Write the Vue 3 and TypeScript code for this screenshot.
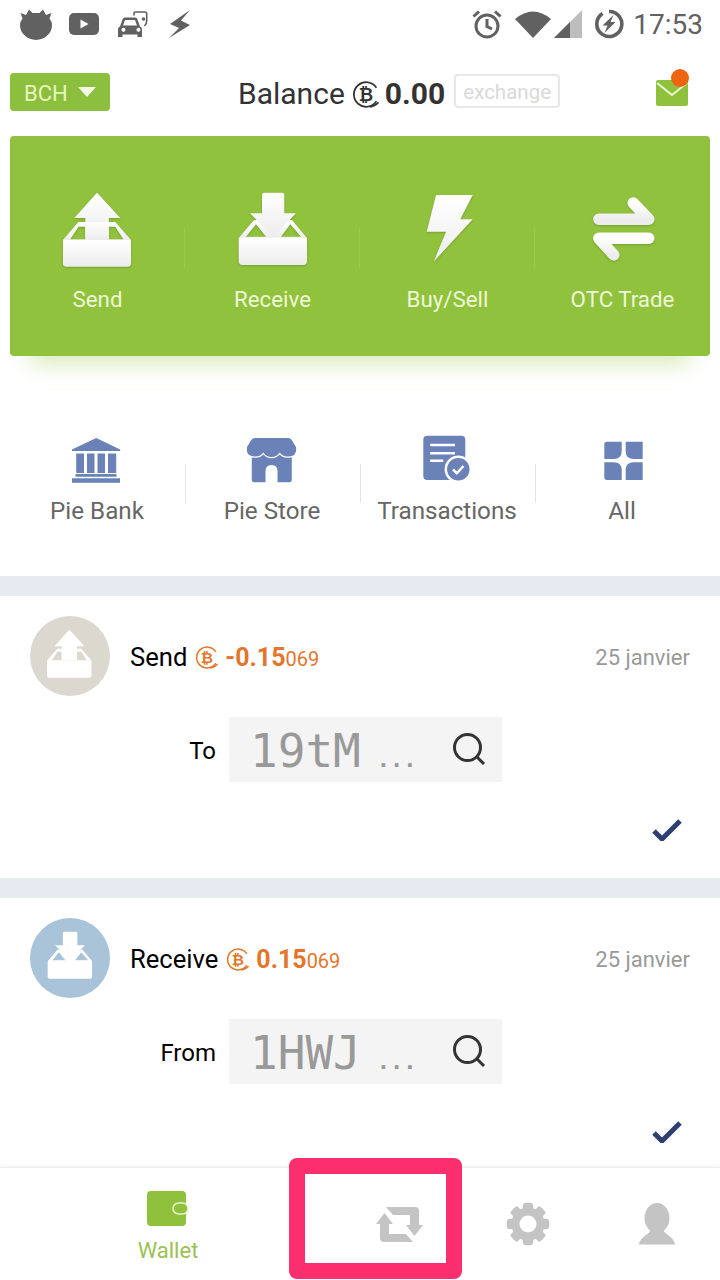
<script setup lang="ts">
const actions = [
  { label: 'Send', icon: '#i-send' },
  { label: 'Receive', icon: '#i-receive' },
  { label: 'Buy/Sell', icon: '#i-bolt' },
  { label: 'OTC Trade', icon: '#i-swap' },
]

const shortcuts = [
  { label: 'Pie Bank', icon: '#i-bank' },
  { label: 'Pie Store', icon: '#i-store' },
  { label: 'Transactions', icon: '#i-doc' },
  { label: 'All', icon: '#i-all' },
]

const transactions = [
  { kind: 'send', title: 'Send', icon: '#i-send', amount: '-0.15', rest: '069', dir: 'To', addr: '19tM', height: 302 },
  { kind: 'receive', title: 'Receive', icon: '#i-receive', amount: '0.15', rest: '069', dir: 'From', addr: '1HWJ', height: 269 },
]

const gearTeeth = [0, 45, 90, 135, 180, 225, 270, 315]
</script>

<template>
  <div class="phone">
    <svg class="defs" width="0" height="0">
      <defs>
        <linearGradient id="soft" x1="0" y1="0" x2="0" y2="1">
          <stop offset="0" stop-color="#ffffff" />
          <stop offset="1" stop-color="#ececec" />
        </linearGradient>
      </defs>
      <symbol id="i-send" viewBox="0.7 0 70 80">
        <path d="M34.7 3Q35.5 3 36 4L58 28H46.5V49H23V28H12L33.5 4Q34 3 34.7 3Z" />
        <path fill-rule="evenodd" d="M.5 50L16 32H53L68.7 50ZM8 49.3H23V36.7H16.3ZM46.5 49.3H61L53 36.7H46.5Z" />
        <path d="M.3 50H68.7V73Q68.7 76.7 65 76.7H4Q.3 76.7 .3 73Z" />
      </symbol>
      <symbol id="i-receive" viewBox="0 0 70 80">
        <path fill-rule="evenodd" d="M.7 48L16 30H54L69 48ZM8 46.7H28L18 34.3ZM43 46.7H63L52.3 34.3Z" />
        <path d="M.7 47.7H69V71Q69 75 65 75H4.7Q.7 75 .7 71Z" />
        <path d="M26.5 2.7H44Q46.3 2.7 46.3 5V23.3H58L35.3 46.7L12 23.3H24V5Q24 2.7 26.5 2.7Z" />
      </symbol>
      <symbol id="i-bolt" viewBox="-8 0 70 80">
        <path d="M15 5H51.7L39.3 29.3H51.7L12.7 71.7L25 41.7H5.7Z" />
      </symbol>
      <symbol id="i-swap" viewBox="-2.5 0 70 80">
        <path class="swap-line" d="M8.3 29.3H58.3L42.7 13" />
        <path class="swap-line" d="M58.3 48.3H8.3L23.3 65" />
      </symbol>
      <symbol id="i-bank" viewBox="0.5 -2 50 50">
        <path d="M24.7 1L48.7 12.5V14H.3V12.5Z" />
        <path d="M4.7 16.5H12.5V36H4.7ZM15.5 16.5H23V36H15.5ZM26 16.5H33.5V36H26ZM36.5 16.5H44.7V36H36.5Z" />
        <path d="M4 37H45V39.7H4ZM.5 41.3H48.5V45.7H.5Z" />
      </symbol>
      <symbol id="i-store" viewBox="0.5 -2 50 50">
        <path d="M5.3 14H45.3V43Q45.3 45.3 43 45.3H31V34Q31 28 25 28T19 34V45.3H7.6Q5.3 45.3 5.3 43Z" />
        <path class="awning" d="M8 1H42Q44.5 1 45.5 3.5L49.5 10Q51 19 42 19.5Q36 19.8 33.3 15.5Q30 20 25 20T16.7 15.5Q14 19.8 8 19.5Q-1 19 .5 10L4.500 3.5Q5.5 1 8 1Z" />
      </symbol>
      <symbol id="i-doc" viewBox="-1 0 50 50">
        <rect x=".3" y=".7" width="42" height="44.3" rx="4" />
        <path class="doc-line" d="M7 10H32M7 18.3H32M7 25.7H20.3" />
        <circle class="doc-ring" cx="35.3" cy="34.3" r="12.5" />
        <path class="doc-check" d="M30 34.5L33.8 38.3L40.5 31" />
      </symbol>
      <symbol id="i-all" viewBox="-7 -6 50 50">
        <path d="M3 .7H17.7V10Q17.7 18 9.700 18H.3V3.4Q.3 .7 3 .7Z" />
        <path d="M21.700 .7H38.7V18H29.7Q21.7 18 21.7 10Z" />
        <path d="M.3 21.3H9.7Q17.7 21.3 17.7 29.3V39H3Q.3 39 .3 36.3Z" />
        <path d="M29.7 21.3H38.7V39H21.7V29.3Q21.7 21.3 29.7 21.3Z" />
      </symbol>
      <symbol id="i-coin" viewBox="0 0 26 26">
        <path class="coin-arc" d="M23.5 6.5A11.800 11.800 0 1 0 23.500 19.5" />
        <path class="coin-arc" d="M17 24.8Q22 24.5 25.500 20.500" />
      </symbol>
    </svg>

    <div class="status">
      <svg class="st cow" viewBox="0 0 32 32">
        <path d="M.5 5L6 7L9 1.500L12.5 5H19.5L23 1.500L26 7L31.5 5L29.5 10.500Q32 13.500 32 17A16 15 0 0 1 0 17Q0 13.500 2.500 10.500Z" />
      </svg>
      <svg class="st yt" viewBox="0 0 30 22">
        <rect width="30" height="22" rx="5" />
        <path class="cut" d="M11.500 6.500L19.500 11L11.500 15.500Z" />
      </svg>
      <svg class="st car" viewBox="0 0 30 26">
        <path d="M4.500 8.500Q5 6.500 7 6.500H17Q19 6.500 19.500 8.500L22 15.500Q24 16 24 18V26H19.500V23.500H4.500V26H0V18Q0 16 2 15.500ZM5 14.500H19L17 9H7ZM4.500 20.500A2 2 0 1 0 4.500 17A2 2 0 0 0 4.500 20.500ZM19.500 20.500A2 2 0 1 0 19.500 17A2 2 0 0 0 19.500 20.500Z" fill-rule="evenodd" />
        <path class="car-line" d="M16 4.500V2.500Q16 1 17.500 1H27Q28.700 1 28.700 2.500V10Q28.700 13 26.500 15" />
        <circle cx="25.500" cy="8" r="1.800" />
      </svg>
      <svg class="st spark" viewBox="0 0 24 28">
        <path d="M22 0L2 14L11 18L1 28L22 15L13 10.500Z" />
      </svg>

      <div class="status-right">
        <svg class="st alarm" viewBox="0 0 30 30">
          <circle class="line" cx="15" cy="17" r="11" />
          <path class="line" d="M15 10V17.500L20 20M1.500 7.500L7 2.500M28.500 7.500L23 2.500" />
        </svg>
        <svg class="st wifi" viewBox="0 0 36 28">
          <path d="M0 9Q18 -6 36 9L18 28Z" />
        </svg>
        <svg class="st signal" viewBox="0 0 30 30">
          <path class="signal-bg" d="M29 1V29H1Z" />
          <path d="M17 13V29H1Z" />
        </svg>
        <svg class="st power" viewBox="0 0 30 30">
          <path class="ring" d="M8.500 4.500A12.500 12.500 0 1 0 15 2.500" />
          <path d="M19.500 6L8.500 16.500H13.500L10.500 24L21.500 13H16.500Z" />
        </svg>
        <span class="time">17:53</span>
      </div>
    </div>

    <header class="top">
      <div class="coin-btn">BCH<i class="caret"></i></div>
      <div class="balance">
        Balance
        <svg class="coin big" viewBox="0 0 26 26">
          <use href="#i-coin" width="26" height="26" />
          <text x="13.500" y="19" text-anchor="middle" class="coin-b">₿</text>
        </svg>
        <b>0.00</b>
        <span class="exchange">exchange</span>
      </div>
      <div class="mail">
        <svg viewBox="0 0 32 26" width="32" height="26">
          <path class="mail-body" d="M0 2Q0 0 2 0H30Q32 0 32 2V24Q32 26 30 26H2Q0 26 0 24Z" />
          <path class="mail-flap" d="M1 3L16 15L31 3" />
        </svg>
        <i class="dot"></i>
      </div>
    </header>

    <section class="card">
      <div v-for="a in actions" :key="a.label" class="action">
        <svg class="action-icon"><use :href="a.icon" /></svg>
        <span>{{ a.label }}</span>
      </div>
    </section>

    <section class="shortcuts">
      <div v-for="s in shortcuts" :key="s.label" class="shortcut">
        <svg class="shortcut-icon"><use :href="s.icon" /></svg>
        <span>{{ s.label }}</span>
      </div>
    </section>

    <article
      v-for="t in transactions"
      :key="t.kind"
      class="tx"
      :style="{ height: `${t.height}px` }"
    >
      <div class="tx-head">
        <div class="avatar" :class="t.kind">
          <svg class="avatar-icon"><use :href="t.icon" /></svg>
        </div>
        <span class="tx-title">{{ t.title }}</span>
        <svg class="coin small" viewBox="0 0 26 26">
          <use href="#i-coin" width="26" height="26" />
          <text x="13.500" y="19" text-anchor="middle" class="coin-b">₿</text>
        </svg>
        <b class="amount">{{ t.amount }}</b><span class="amount-rest">{{ t.rest }}</span>
        <span class="date">25 janvier</span>
      </div>
      <div class="tx-addr">
        <span class="dir">{{ t.dir }}</span>
        <div class="addr-box">
          <span class="addr">{{ t.addr }}</span>
          <span class="dots">...</span>
          <svg class="search" viewBox="0 0 36 36" width="36" height="36">
            <circle cx="15.500" cy="15.500" r="13" />
            <path d="M25 25L32 32" />
          </svg>
        </div>
      </div>
      <div class="tx-state">
        <svg viewBox="0 0 30 22" width="30" height="22">
          <path d="M2 12L10 20L28 2" />
        </svg>
      </div>
    </article>

    <nav class="tabs">
      <div class="tab wallet">
        <svg viewBox="0 0 42 36" width="42" height="36">
          <rect width="39" height="35" rx="4" />
          <rect class="clasp" x="26" y="12" width="15" height="11" rx="5.500" />
        </svg>
        <span>Wallet</span>
      </div>
      <div></div>
      <div class="tab">
        <svg viewBox="0 -6 48 48" width="48" height="48">
          <path d="M10 1H39Q43 1 43 5V19H47L38.500 30L30 19H34V9H17Z" />
          <path transform="rotate(180 23.500 18.500)" d="M10 1H39Q43 1 43 5V19H47L38.500 30L30 19H34V9H17Z" />
        </svg>
      </div>
      <div class="tab">
        <svg viewBox="0 0 48 48" width="48" height="48">
          <rect
            v-for="deg in gearTeeth"
            :key="deg"
            x="19"
            y="3"
            width="10"
            height="10"
            rx="2"
            :transform="`rotate(${deg} 24 24)`"
          />
          <circle class="gear-ring" cx="24" cy="24" r="12.500" />
        </svg>
      </div>
      <div class="tab">
        <svg viewBox="0 0 48 48" width="48" height="48">
          <ellipse cx="25" cy="18" rx="12.500" ry="15" />
          <path d="M19 29C18 35 8 36 7 44.500H43C42 36 32 35 31 29Z" />
        </svg>
      </div>
    </nav>

    <div class="highlight"></div>
  </div>
</template>

<style>
html,
body {
  background: #fff;
}
</style>

<style scoped>
.phone {
  position: relative;
  display: flex;
  flex-direction: column;
  width: 720px;
  height: 1280px;
  overflow: hidden;
  background: #fff;
  font-family: Roboto, 'Liberation Sans', sans-serif;
}

.defs {
  position: absolute;
}

.swap-line {
  fill: none;
  stroke: url(#soft);
  stroke-width: 11.5;
  stroke-linecap: round;
  stroke-linejoin: round;
}

.awning {
  stroke: #fff;
  stroke-width: 2.5;
  paint-order: stroke;
}

.doc-line {
  fill: none;
  stroke: #fff;
  stroke-width: 2.4;
}

.doc-ring {
  stroke: #fff;
  stroke-width: 2.5;
}

.doc-check {
  fill: none;
  stroke: #fff;
  stroke-width: 2.5;
}

.coin-arc {
  fill: none;
  stroke: currentColor;
  stroke-width: 1.7;
}

.coin-b {
  font-family: 'DejaVu Sans', sans-serif;
  font-weight: 700;
  font-size: 17px;
  fill: currentColor;
}

/* status bar */
.status {
  display: flex;
  align-items: center;
  flex: none;
  height: 50px;
  padding: 0 17px 2px 20px;
  box-sizing: border-box;
}

.st {
  flex: none;
  fill: #616161;
}

.cow {
  width: 32px;
  height: 32px;
  margin-right: 17px;
}

.yt {
  width: 30px;
  height: 22px;
  margin-right: 19px;
}

.yt .cut {
  fill: #fff;
}

.car {
  width: 30px;
  height: 26px;
  margin-right: 20px;
}

.car-line {
  fill: none;
  stroke: #616161;
  stroke-width: 1.6;
}

.spark {
  width: 24px;
  height: 28px;
}

.status-right {
  display: flex;
  align-items: center;
  margin-left: auto;
}

.alarm {
  width: 30px;
  height: 30px;
  margin-right: 13px;
}

.line {
  fill: none;
  stroke: #616161;
  stroke-width: 3;
}

.ring {
  fill: none;
  stroke: #616161;
  stroke-width: 3.6;
}

.wifi {
  width: 36px;
  height: 28px;
  margin-right: 2px;
}

.signal {
  width: 30px;
  height: 30px;
  margin-right: 11px;
}

.signal-bg {
  fill: #bdbdbd;
}

.power {
  width: 30px;
  height: 30px;
  margin-right: 9px;
}

.time {
  color: #616161;
  font-size: 28px;
}

/* balance row */
.top {
  display: flex;
  align-items: center;
  flex: none;
  height: 84px;
  padding: 0 32px 0 10px;
  box-sizing: border-box;
}

.coin-btn {
  display: flex;
  align-items: center;
  width: 100px;
  height: 38px;
  padding: 2px 0 0 14px;
  box-sizing: border-box;
  border-radius: 4px;
  background: #8dbf3f;
  color: #e6f6bc;
  font-size: 22px;
}

.caret {
  margin-left: 10px;
  margin-bottom: 2px;
  border-style: solid;
  border-width: 10px 9px 0;
  border-color: #f3f9e3 transparent transparent;
}

.balance {
  display: flex;
  align-items: center;
  margin-top: 2px;
  margin-left: 128px;
  color: #333;
  font-size: 30px;
}

.balance b {
  font-weight: 700;
}

.coin {
  flex: none;
}

.coin.big {
  width: 27px;
  height: 27px;
  margin: 2px 6px 0 7px;
}

.exchange {
  display: flex;
  align-items: center;
  justify-content: center;
  width: 106px;
  height: 34px;
  margin: -4px 0 0 9px;
  padding-top: 1px;
  box-sizing: border-box;
  border: 2px solid #e8e8e8;
  border-radius: 4px;
  color: #d9d9d9;
  font-size: 20.5px;
}

.mail {
  position: relative;
  display: flex;
  margin-left: auto;
  margin-top: 2px;
}

.mail-body {
  fill: #8fc13d;
}

.mail-flap {
  fill: none;
  stroke: #eef7d6;
  stroke-width: 2;
}

.dot {
  position: absolute;
  top: -11px;
  right: -1px;
  width: 18px;
  height: 18px;
  border-radius: 50%;
  background: #ee6411;
}

/* green card */
.card {
  display: grid;
  flex: none;
  grid-template-columns: repeat(4, 1fr);
  height: 220px;
  margin: 2px 10px 0;
  border-radius: 4px;
  background: #91c23d;
  box-shadow: 0 30px 20px -20px rgba(145, 194, 61, 0.3);
}

.action {
  position: relative;
  display: flex;
  flex-direction: column;
  align-items: center;
  padding-top: 54px;
  color: #eef7d6;
  font-size: 22.3px;
  line-height: 26px;
}

.action:not(:last-child)::after {
  content: '';
  position: absolute;
  top: 92px;
  right: 0;
  width: 1px;
  height: 40px;
  background: rgba(255, 255, 255, 0.1);
}

.action-icon {
  width: 70px;
  height: 80px;
  margin-bottom: 16px;
  fill: url(#soft);
  filter: drop-shadow(0 1px 1px rgba(0, 0, 0, 0.18));
}

/* shortcut row */
.shortcuts {
  display: grid;
  flex: none;
  grid-template-columns: repeat(4, 1fr);
  height: 141px;
  margin-top: 79px;
  padding: 0 10.5px 0 9.5px;
  border-bottom: 20px solid #e6eaf1;
}

.shortcut {
  position: relative;
  display: flex;
  flex-direction: column;
  align-items: center;
  color: #666;
  font-size: 24.2px;
  line-height: 28px;
}

.shortcut:not(:last-child)::after {
  content: '';
  position: absolute;
  top: 29px;
  right: -1px;
  width: 1px;
  height: 39px;
  background: #e5e5e5;
}

.shortcut-icon {
  width: 50px;
  height: 50px;
  margin-bottom: 12px;
  fill: #6a82b8;
}

/* transactions */
.tx {
  flex: none;
  box-sizing: border-box;
  padding-top: 20px;
  overflow: hidden;
}

.tx:first-of-type {
  border-bottom: 20px solid #e6eaf1;
}

.tx-head {
  display: flex;
  align-items: center;
  height: 80px;
  padding: 0 30px;
}

.avatar {
  display: flex;
  align-items: center;
  justify-content: center;
  flex: none;
  width: 80px;
  height: 80px;
  margin-right: 20px;
  border-radius: 50%;
}

.avatar.send {
  background: #dbd9cf;
}

.avatar.receive {
  background: #a9c3d8;
}

.avatar-icon {
  width: 46px;
  height: 52px;
  margin-bottom: 4px;
  fill: #fff;
}

.tx-title {
  margin-top: 2px;
  color: #000;
  font-size: 25.6px;
}

.coin.small {
  width: 23px;
  height: 23px;
  margin: 3px 7px 0 8px;
  color: #e4762b;
}

.amount {
  margin-top: 2px;
  color: #e4762b;
  font-size: 25px;
  font-weight: 700;
}

.amount-rest {
  margin-top: 5px;
  color: #e4762b;
  font-size: 20px;
}

.date {
  margin-top: 2px;
  margin-left: auto;
  color: #999;
  font-size: 22px;
}

.tx-addr {
  display: flex;
  align-items: center;
  margin-top: 21px;
}

.dir {
  width: 186px;
  margin-top: 3px;
  margin-left: 30px;
  color: #000;
  font-size: 24px;
  text-align: right;
}

.addr-box {
  display: flex;
  align-items: center;
  width: 273px;
  height: 65px;
  margin-left: 13px;
  padding-left: 21px;
  box-sizing: border-box;
  background: #f4f4f4;
}

.addr {
  margin-top: 2px;
  color: #999;
  font-family: 'DejaVu Sans Mono', monospace;
  font-size: 46px;
}

.dots {
  margin: 20px 0 0 16px;
  color: #999;
  font-family: 'DejaVu Sans Mono', monospace;
  font-weight: 700;
  font-size: 22px;
}

.search {
  margin-left: auto;
  margin-right: 14px;
}

.search circle,
.search path {
  fill: none;
  stroke: #333;
  stroke-width: 3;
}

.tx-state {
  display: flex;
  justify-content: flex-end;
  margin-top: 37px;
  padding-right: 38px;
}

.tx-state path {
  fill: none;
  stroke: #2f4070;
  stroke-width: 5;
}

/* tab bar */
.tabs {
  position: relative;
  display: grid;
  flex: none;
  grid-template-columns: 128px 104px repeat(3, 128px);
  height: 113px;
  padding-left: 104px;
  box-sizing: border-box;
  border-top: 1px solid #eee;
  background: #fff;
  box-shadow: 0 -1px 3px rgba(0, 0, 0, 0.06);
}

.tab {
  display: flex;
  flex-direction: column;
  align-items: center;
  padding-top: 32px;
  fill: #c4c4c4;
}

.tab.wallet {
  padding-top: 23px;
  color: #9bc152;
  fill: #8fc13d;
  font-size: 22px;
}

.tab.wallet span {
  margin-top: 11px;
}

.clasp {
  stroke: #e8f5c8;
  stroke-width: 1.5;
}

.gear-ring {
  fill: #fff;
  stroke: #c4c4c4;
  stroke-width: 8;
}

.highlight {
  position: absolute;
  top: 1158px;
  left: 289px;
  width: 173px;
  height: 121px;
  box-sizing: border-box;
  border: 16px solid #fb2f6e;
  border-radius: 8px;
}
</style>
